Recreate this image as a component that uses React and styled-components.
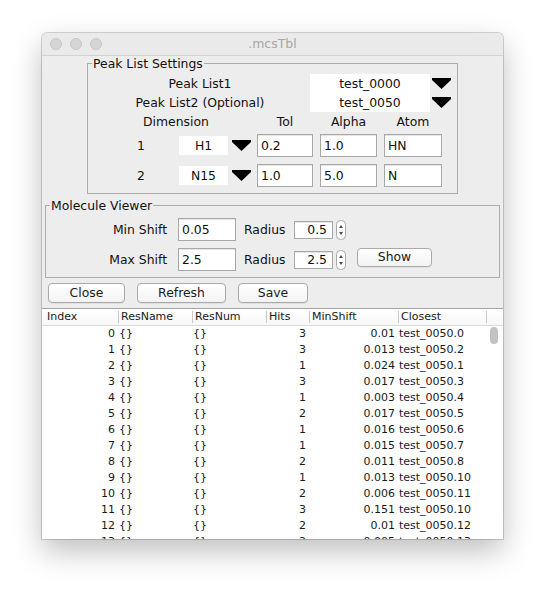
import React from "react";
import styled, { createGlobalStyle } from "styled-components";

const GlobalStyle = createGlobalStyle`
	html, body {
		margin: 0;
		padding: 0;
		background: #ffffff;
	}
	body {
		font-family: "DejaVu Sans", "Liberation Sans", sans-serif;
	}
`;

const Page = styled.div`
	width: 545px;
	height: 590px;
	box-sizing: border-box;
	padding: 33px 0 0 42px;
	background: #ffffff;
	overflow: hidden;
`;

const Window = styled.div`
	width: 461px;
	height: 506px;
	background: #ededed;
	border-radius: 5px 5px 0 0;
	box-shadow: 0 0 0 1px rgba(0, 0, 0, 0.16), 0 12px 30px rgba(0, 0, 0, 0.26);
	display: flex;
	flex-direction: column;
	overflow: hidden;
	font-size: 12.4px;
	color: #111;
`;

const TitleBar = styled.div`
	height: 22px;
	flex-shrink: 0;
	display: grid;
	grid-template-columns: 1fr auto 1fr;
	align-items: center;
	background: #eaeaea;
	border-bottom: 1px solid #d2d2d2;
	border-radius: 5px 5px 0 0;
`;

const Lights = styled.div`
	display: flex;
	gap: 8px;
	padding-left: 8px;
`;

const Light = styled.span`
	width: 12px;
	height: 12px;
	box-sizing: border-box;
	border-radius: 50%;
	background: #d5d5d5;
	border: 1px solid #c7c7c7;
`;

const Title = styled.div`
	font-size: 12.5px;
	color: #a6a6a6;
	line-height: 22px;
`;

const Group = styled.div`
	position: relative;
	box-sizing: border-box;
	border: 1px solid #ababab;
	margin: ${(p) => p.$margin};
	width: ${(p) => p.$width}px;
	padding: ${(p) => p.$padding};
`;

const Legend = styled.span`
	position: absolute;
	top: -8px;
	left: 4px;
	padding: 0 1px;
	line-height: 15px;
	background: #ededed;
	white-space: nowrap;
`;

const ListGrid = styled.div`
	display: grid;
	grid-template-columns: 130px 165px 21px;
	grid-auto-rows: 19px;
	align-items: center;
	margin-left: 47px;
`;

const Label = styled.div`
	text-align: ${(p) => p.$align || "left"};
	white-space: nowrap;
	padding: ${(p) => p.$pad || "0"};
`;

const ComboValue = styled.div`
	justify-self: ${(p) => (p.$end ? "end" : "start")};
	width: ${(p) => p.$w}px;
	height: 19px;
	line-height: 19px;
	background: #ffffff;
	text-align: center;
`;

const ArrowBox = styled.div`
	justify-self: end;
	display: flex;
	align-items: center;
	height: 100%;
`;

const dimColumns = "55px 49px 23px 62px 64px 65px";

const DimHead = styled.div`
	display: grid;
	grid-template-columns: ${dimColumns};
	height: 19px;
	align-items: center;
	margin: 0 0 3px 36px;
`;

const HeadCell = styled.div`
	grid-column: ${(p) => p.$span || "auto"};
	justify-self: ${(p) => (p.$w ? "end" : "stretch")};
	width: ${(p) => (p.$w ? `${p.$w}px` : "auto")};
	text-align: center;
`;

const DimRows = styled.div`
	display: grid;
	grid-template-columns: ${dimColumns};
	grid-auto-rows: 23px;
	row-gap: 7px;
	align-items: center;
	margin-left: 36px;
`;

const Field = styled.div`
	justify-self: end;
	box-sizing: border-box;
	width: ${(p) => p.$w}px;
	height: ${(p) => p.$h || 23}px;
	line-height: ${(p) => (p.$h || 23) - 2}px;
	border: 1px solid #a7a7a7;
	box-shadow: inset 0 1px 0 #e6e6e6;
	background: #ffffff;
	padding: ${(p) => (p.$right ? "0 5px 0 0" : "0 0 0 3px")};
	text-align: ${(p) => (p.$right ? "right" : "left")};
	white-space: nowrap;
`;

const ViewerGrid = styled.div`
	display: grid;
	grid-template-columns: 132px 58px 58px 39px 13px 86px;
	grid-auto-rows: 23px;
	row-gap: 7px;
	align-items: center;
`;

const SpinBox = styled.div`
	justify-self: end;
	display: flex;
	align-items: center;
`;

const Buttons = styled.div`
	display: flex;
	gap: 12px;
	margin: 5px 0 0 6px;
`;

const Button = styled.button`
	justify-self: end;
	align-self: ${(p) => (p.$top ? "start" : "auto")};
	width: ${(p) => p.$w}px;
	height: ${(p) => p.$h || 20}px;
	box-sizing: border-box;
	padding: 0;
	margin: 0;
	border: 1px solid #a9a9a9;
	border-radius: 4px;
	background: linear-gradient(#ffffff, #f3f3f3);
	box-shadow: 0 1px 0 rgba(0, 0, 0, 0.05);
	font-family: "DejaVu Sans", "Liberation Sans", sans-serif;
	font-size: 12.4px;
	color: #1a1a1a;
	line-height: 1;
`;

const Table = styled.div`
	flex: 1;
	margin-top: 5px;
	border-top: 1px solid #a3a3a3;
	background: #ffffff;
	display: flex;
	flex-direction: column;
	min-height: 0;
	font-size: 11px;
	color: #1a1a1a;
`;

const HeaderRow = styled.div`
	display: flex;
	height: 16px;
	flex-shrink: 0;
	align-items: center;
	border-bottom: 1px solid #dadada;
	background: linear-gradient(#ffffff, #f7f7f7);
`;

const TH = styled.div`
	box-sizing: border-box;
	width: ${(p) => p.$w}px;
	height: 12px;
	line-height: 12px;
	padding-left: ${(p) => (p.$first ? 5 : 2)}px;
	border-left: ${(p) => (p.$first ? "none" : "1px solid #c9c9c9")};
	white-space: nowrap;
	flex-shrink: 0;
`;

const Body = styled.div`
	flex: 1;
	display: flex;
	min-height: 0;
	overflow: hidden;
`;

const Rows = styled.div`
	width: 444px;
	flex-shrink: 0;
`;

const Row = styled.div`
	display: flex;
	height: 16px;
	line-height: 16px;
`;

const TD = styled.div`
	box-sizing: border-box;
	width: ${(p) => p.$w}px;
	flex-shrink: 0;
	text-align: ${(p) => (p.$right ? "right" : "left")};
	padding: ${(p) => (p.$right ? "0 3px 0 0" : "0 0 0 1px")};
	white-space: nowrap;
	overflow: hidden;
`;

const ScrollTrack = styled.div`
	flex: 1;
	padding: 1px 0 0 4px;
`;

const Thumb = styled.div`
	width: 8px;
	height: 17px;
	border-radius: 4px;
	background: #c2c2c2;
`;

const DropArrow = () => (
	<svg width="19" height="11" viewBox="0 0 19 11">
		<polygon points="0,0 19,0 19,2 9.5,11 0,2" fill="#000" />
	</svg>
);

const Spinner = () => (
	<svg width="10" height="20" viewBox="0 0 10 20">
		<rect x="0.5" y="0.5" width="9" height="19" rx="4" fill="#fbfbfb" stroke="#a9a9a9" />
		<polygon points="3,8 7,8 5,5" fill="#4a4a4a" />
		<polygon points="3,12 7,12 5,15" fill="#4a4a4a" />
	</svg>
);

const columns = [
	{ key: "index", title: "Index", w: 76, right: true },
	{ key: "resName", title: "ResName", w: 74 },
	{ key: "resNum", title: "ResNum", w: 74 },
	{ key: "hits", title: "Hits", w: 43, right: true },
	{ key: "minShift", title: "MinShift", w: 89, right: true },
	{ key: "closest", title: "Closest", w: 88 },
];

const hits = [
	[3, "0.01", "test_0050.0"],
	[3, "0.013", "test_0050.2"],
	[1, "0.024", "test_0050.1"],
	[3, "0.017", "test_0050.3"],
	[1, "0.003", "test_0050.4"],
	[2, "0.017", "test_0050.5"],
	[1, "0.016", "test_0050.6"],
	[1, "0.015", "test_0050.7"],
	[2, "0.011", "test_0050.8"],
	[1, "0.013", "test_0050.10"],
	[2, "0.006", "test_0050.11"],
	[3, "0.151", "test_0050.10"],
	[2, "0.01", "test_0050.12"],
	[2, "0.005", "test_0050.13"],
];

const rows = hits.map(([h, shift, closest], i) => ({
	index: i,
	resName: "{}",
	resNum: "{}",
	hits: h,
	minShift: shift,
	closest,
}));

const dims = [
	{ n: "1", nuc: "H1", tol: "0.2", alpha: "1.0", atom: "HN" },
	{ n: "2", nuc: "N15", tol: "1.0", alpha: "5.0", atom: "N" },
];

const App = () => {
	return (
		<Page>
			<GlobalStyle />
			<Window>
				<TitleBar>
					<Lights>
						<Light />
						<Light />
						<Light />
					</Lights>
					<Title>.mcsTbl</Title>
					<span />
				</TitleBar>

				<Group $margin="7px 0 0 45px" $width={371} $padding="10px 0 6px 0">
					<Legend>Peak List Settings</Legend>
					<ListGrid>
						<Label $align="center">Peak List1</Label>
						<ComboValue $w={120} $end>test_0000</ComboValue>
						<ArrowBox>
							<DropArrow />
						</ArrowBox>
						<Label $align="center">Peak List2 (Optional)</Label>
						<ComboValue $w={120} $end>test_0050</ComboValue>
						<ArrowBox>
							<DropArrow />
						</ArrowBox>
					</ListGrid>
					<DimHead>
						<HeadCell $span="1 / 3">Dimension</HeadCell>
						<HeadCell $span="4" $w={56}>Tol</HeadCell>
						<HeadCell $span="5" $w={57}>Alpha</HeadCell>
						<HeadCell $span="6" $w={58}>Atom</HeadCell>
					</DimHead>
					<DimRows>
						{dims.map((d) => (
							<React.Fragment key={d.n}>
								<Label $pad="0 0 0 13px">{d.n}</Label>
								<ComboValue $w={49}>{d.nuc}</ComboValue>
								<ArrowBox>
									<DropArrow />
								</ArrowBox>
								<Field $w={56}>{d.tol}</Field>
								<Field $w={57}>{d.alpha}</Field>
								<Field $w={58}>{d.atom}</Field>
							</React.Fragment>
						))}
					</DimRows>
				</Group>

				<Group $margin="11px 0 0 3px" $width={455} $padding="12px 0 6px 0">
					<Legend>Molecule Viewer</Legend>
					<ViewerGrid>
						<Label $align="right" $pad="0 11px 0 0">Min Shift</Label>
						<Field $w={58}>0.05</Field>
						<Label $pad="0 0 0 8px">Radius</Label>
						<Field $w={39} $h={18} $right>0.5</Field>
						<SpinBox>
							<Spinner />
						</SpinBox>
						<span />
						<Label $align="right" $pad="0 11px 0 0">Max Shift</Label>
						<Field $w={58}>2.5</Field>
						<Label $pad="0 0 0 8px">Radius</Label>
						<Field $w={39} $h={18} $right>2.5</Field>
						<SpinBox>
							<Spinner />
						</SpinBox>
						<Button $w={75} $h={19} $top>Show</Button>
					</ViewerGrid>
				</Group>

				<Buttons>
					<Button $w={77}>Close</Button>
					<Button $w={89}>Refresh</Button>
					<Button $w={70}>Save</Button>
				</Buttons>

				<Table>
					<HeaderRow>
						{columns.map((c, i) => (
							<TH key={c.key} $w={c.w} $first={i === 0}>
								{c.title}
							</TH>
						))}
						<TH $w={17} />
					</HeaderRow>
					<Body>
						<Rows>
							{rows.map((r) => (
								<Row key={r.index}>
									{columns.map((c) => (
										<TD key={c.key} $w={c.w} $right={c.right}>
											{r[c.key]}
										</TD>
									))}
								</Row>
							))}
						</Rows>
						<ScrollTrack>
							<Thumb />
						</ScrollTrack>
					</Body>
				</Table>
			</Window>
		</Page>
	);
};

export default App;
